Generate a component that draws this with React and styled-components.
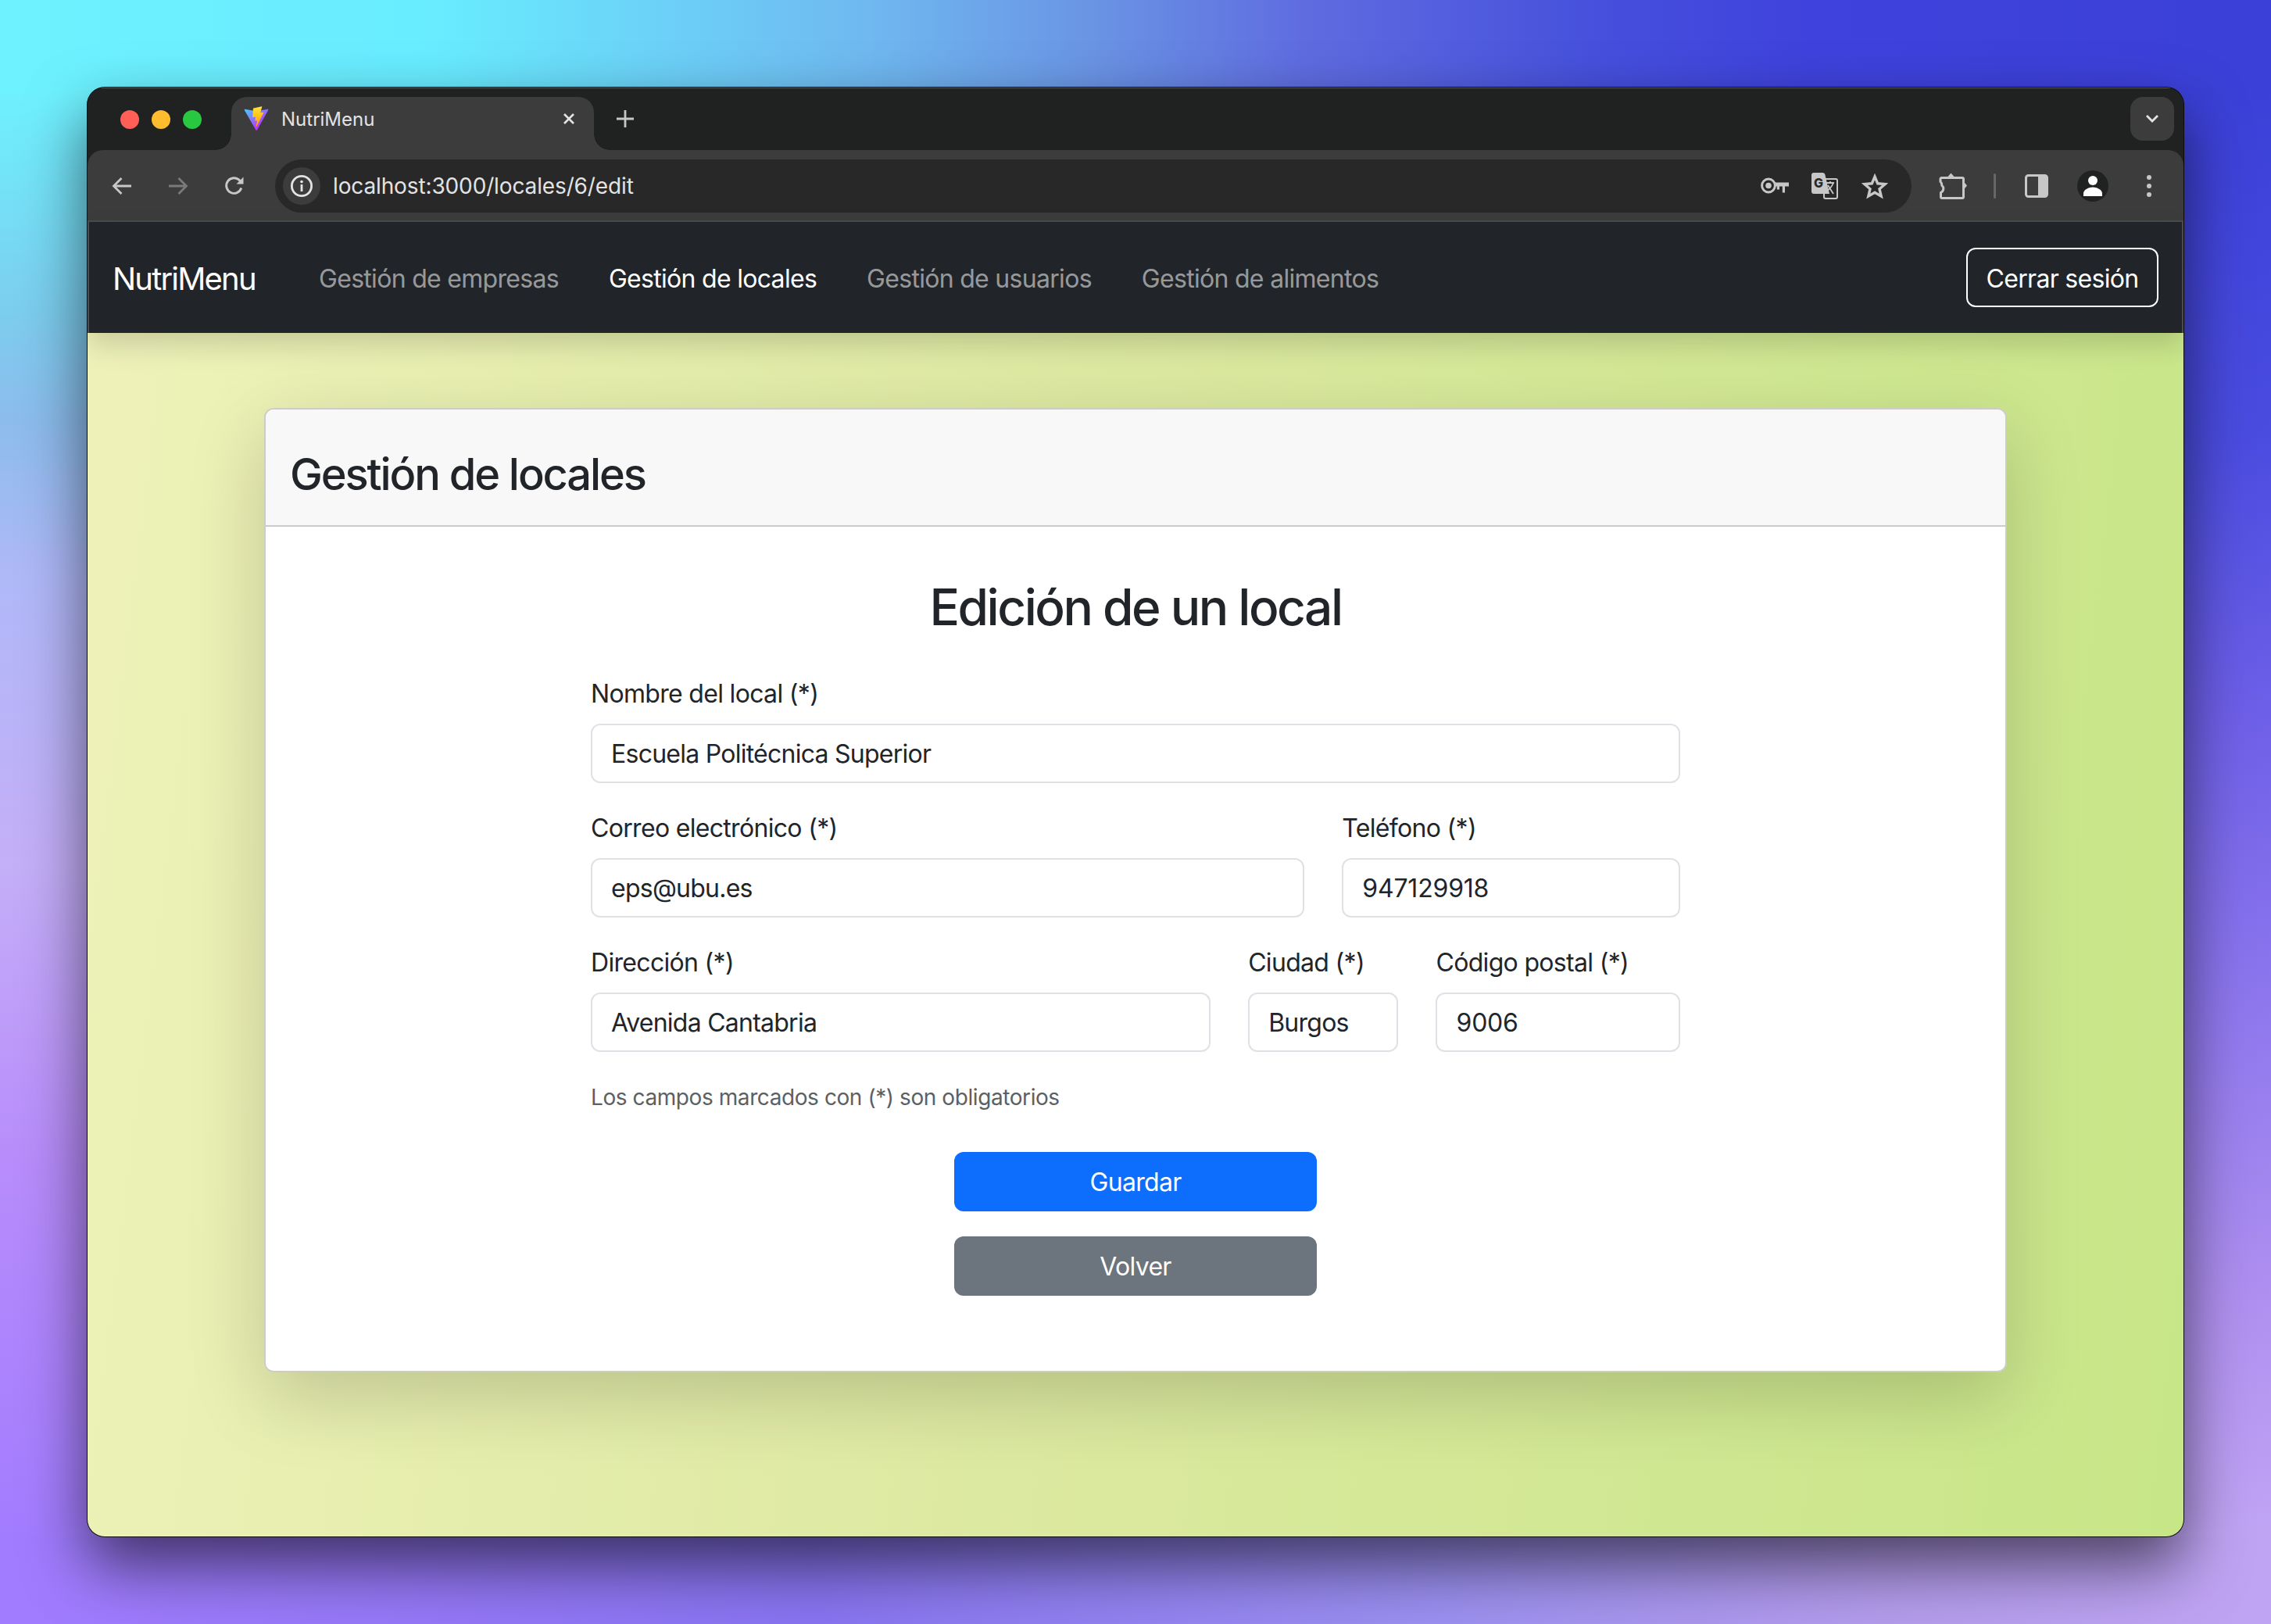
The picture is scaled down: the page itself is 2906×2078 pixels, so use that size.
import styled, { createGlobalStyle } from "styled-components";

const GlobalStyle = createGlobalStyle`
  html, body {
    margin: 0;
    padding: 0;
    width: 2906px;
    height: 2078px;
    overflow: hidden;
  }
  * {
    box-sizing: border-box;
  }
  body {
    font-family: Inter, "Liberation Sans", sans-serif;
    background:
      linear-gradient(90deg, #6ef2ff 0, #68ecff 556px, #6fb8f0 1112px, #6a95e4 1390px, #5f6ce0 1668px, #4650dc 2040px, #3f42dc 2316px, #3b40d8 2906px) top / 100% 112px no-repeat,
      linear-gradient(90deg, #a27cff 0, #8874f0 1038px, #9c90f0 1853px, #b49cec 2409px, #c0a4f4 2906px) bottom / 100% 112px no-repeat,
      linear-gradient(180deg, #6ef2ff 112px, #7ccdee 400px, #8cbcec 540px, #b0b8f8 741px, #c4aef8 1112px, #b88cfb 1482px, #a27cff 1966px) left / 50% 100% no-repeat,
      linear-gradient(180deg, #3b40d8 112px, #4a4ce0 556px, #6f60e8 926px, #8f78ee 1297px, #b090f0 1668px, #c0a4f4 1966px) right / 50% 100% no-repeat;
  }
`;

const Page = styled.div`
  padding: 112px 112px 0;
`;

const Window = styled.div`
  height: 1854px;
  display: flex;
  flex-direction: column;
  border-radius: 22px;
  overflow: hidden;
  background: #202221;
  box-shadow: 0 0 0 1px #0c0c0c, 0 36px 80px rgba(0, 0, 0, 0.6);
`;

const TabStrip = styled.div`
  height: 80px;
  flex: none;
  display: flex;
  align-items: flex-start;
  padding: 11px 12px 0 0;
  border-top: 1px solid #5a5c5b;
  background: #202221;
`;

const Lights = styled.div`
  display: flex;
  gap: 16px;
  width: 184px;
  flex: none;
  padding: 17px 0 0 42px;
`;

const Light = styled.span`
  width: 24px;
  height: 24px;
  border-radius: 50%;
  background: ${(p) => p.$color};
`;

const Tab = styled.div`
  position: relative;
  width: 464px;
  height: 68px;
  flex: none;
  display: flex;
  align-items: center;
  padding: 0 24px 12px 16px;
  border-radius: 20px 20px 0 0;
  background: #3c3c3c;
  color: #e3e3e3;
  font-size: 24px;

  &::before,
  &::after {
    content: "";
    position: absolute;
    bottom: 0;
    width: 20px;
    height: 20px;
  }
  &::before {
    left: -20px;
    background: radial-gradient(circle at 0 0, transparent 19.5px, #3c3c3c 20px);
  }
  &::after {
    right: -20px;
    background: radial-gradient(circle at 100% 0, transparent 19.5px, #3c3c3c 20px);
  }
`;

const TabTitle = styled.span`
  flex: 1;
  margin-left: 16px;
`;

const NewTab = styled.div`
  width: 40px;
  height: 56px;
  flex: none;
  display: flex;
  align-items: center;
  justify-content: center;
  margin-left: 20px;
`;

const TabMenu = styled.div`
  width: 56px;
  height: 56px;
  flex: none;
  display: flex;
  align-items: center;
  justify-content: center;
  margin-left: auto;
  border-radius: 16px;
  background: #3c3c3c;
`;

const Toolbar = styled.div`
  height: 92px;
  flex: none;
  display: flex;
  align-items: center;
  padding: 2px 8px 0;
  border-radius: 20px 20px 0 0;
  border-bottom: 2px solid #4a4c4b;
  background: #3c3c3c;
`;

const ToolButton = styled.div`
  width: ${(p) => p.$width || 72}px;
  height: 56px;
  flex: none;
  display: flex;
  align-items: center;
  justify-content: center;
`;

const Omnibox = styled.div`
  flex: 1;
  height: 68px;
  display: flex;
  align-items: center;
  margin: 0 17px 0 16px;
  padding: 0 15px 0 10px;
  border-radius: 34px;
  background: #282828;
`;

const InfoChip = styled.div`
  width: 48px;
  height: 48px;
  flex: none;
  display: flex;
  align-items: center;
  justify-content: center;
  border-radius: 50%;
  background: #3c3c3c;
`;

const Url = styled.span`
  flex: 1;
  margin-left: 16px;
  color: #e3e3e3;
  font-size: 28px;
  letter-spacing: -0.13px;
`;

const Separator = styled.span`
  width: 3px;
  height: 32px;
  flex: none;
  margin: 0 16px;
  border-radius: 2px;
  background: #666866;
`;

const Avatar = styled.div`
  width: 40px;
  height: 40px;
  display: flex;
  align-items: center;
  justify-content: center;
  border-radius: 50%;
  background: #202221;
`;

const NavBar = styled.nav`
  position: relative;
  z-index: 1;
  height: 142px;
  flex: none;
  display: flex;
  align-items: center;
  padding: 0 30px 0 30px;
  border-left: 2px solid #4a4c50;
  border-right: 2px solid #4a4c50;
  background: #212529;
  box-shadow: 0 16px 32px rgba(0, 0, 0, 0.15);
`;

const Brand = styled.span`
  width: 264px;
  flex: none;
  padding-top: 3px;
  color: #fff;
  font-size: 40px;
  letter-spacing: -1.8px;
`;

const NavLink = styled.span`
  margin-right: 64px;
  padding-top: 3px;
  color: ${(p) => (p.$active ? "#fff" : "rgba(255, 255, 255, 0.55)")};
  font-size: 32px;
  letter-spacing: -0.7px;
`;

const LogoutButton = styled.button`
  width: 246px;
  height: 76px;
  margin-left: auto;
  padding: 2px 0 0;
  border: 2px solid #fff;
  border-radius: 12px;
  background: transparent;
  color: #fff;
  font-family: inherit;
  font-size: 32px;
  letter-spacing: -0.7px;
`;

const Main = styled.main`
  flex: 1;
  padding: 96px 226px 0 226px;
  background: linear-gradient(97deg, #eef2b9 0%, #dde9a1 45%, #c7e687 100%);
`;

const CardShadow = styled.div`
  border-radius: 12px;
  box-shadow: 0 32px 96px rgba(0, 0, 0, 0.175);
`;

const Card = styled.section`
  height: 1234px;
  border: 2px solid #cdcdc6;
  border-radius: 12px;
  overflow: hidden;
  background: #fff;
`;

const CardHeader = styled.header`
  height: 150px;
  padding: 50px 31px 0;
  border-bottom: 2px solid #cccccc;
  background: #f8f8f8;
`;

const HeaderTitle = styled.h3`
  margin: 0;
  color: #212529;
  font-size: 56px;
  font-weight: 500;
  line-height: 67px;
  letter-spacing: -2.1px;
`;

const CardBody = styled.div`
  display: flex;
  flex-direction: column;
  align-items: center;
  padding-top: 64px;
`;

const FormTitle = styled.h2`
  margin: 0 0 47px;
  color: #212529;
  font-size: 64px;
  font-weight: 500;
  line-height: 77px;
  letter-spacing: -2.5px;
`;

const Form = styled.form`
  width: 1394px;
  display: grid;
  grid-template-columns: repeat(12, 1fr);
  column-gap: 48px;
  row-gap: 32px;
`;

const Field = styled.div`
  grid-column: span ${(p) => p.$span};
  min-width: 0;
`;

const Label = styled.label`
  display: block;
  margin-bottom: 14px;
  padding-top: 2px;
  color: #212529;
  font-size: 32px;
  line-height: 48px;
  letter-spacing: -0.68px;
`;

const Input = styled.input`
  display: block;
  width: 100%;
  height: 76px;
  padding: 0 24px;
  border: 2px solid #dee2e6;
  border-radius: 12px;
  background: #fff;
  color: #212529;
  font-family: inherit;
  font-size: 32px;
  letter-spacing: ${(p) => (p.$digits ? "-0.2px" : "-0.75px")};
  outline: none;
`;

const Hint = styled.small`
  grid-column: span 12;
  margin-top: 5px;
  color: #5c5f63;
  font-size: 28px;
  line-height: 42px;
  letter-spacing: -0.42px;
`;

const Actions = styled.div`
  display: flex;
  flex-direction: column;
  gap: 32px;
  margin-top: 49px;
`;

const ActionButton = styled.button`
  width: 464px;
  height: 76px;
  border: 0;
  border-radius: 12px;
  background: ${(p) => p.$color};
  color: #fff;
  font-family: inherit;
  font-size: 32px;
  letter-spacing: -0.7px;
`;

const ViteIcon = () => (
  <svg width="32" height="32" viewBox="0 0 410 404" fill="none">
    <defs>
      <linearGradient id="viteA" x1="6" y1="33" x2="235" y2="344" gradientUnits="userSpaceOnUse">
        <stop stopColor="#41D1FF" />
        <stop offset="1" stopColor="#BD34FE" />
      </linearGradient>
      <linearGradient id="viteB" x1="194.65" y1="8.8" x2="236" y2="292" gradientUnits="userSpaceOnUse">
        <stop stopColor="#FFEA83" />
        <stop offset="0.083" stopColor="#FFDD35" />
        <stop offset="1" stopColor="#FFA800" />
      </linearGradient>
    </defs>
    <path
      d="M399.641 59.5246L215.643 388.545C211.844 395.338 202.084 395.378 198.228 388.618L10.5817 59.5563C6.38087 52.1896 12.6802 43.2665 21.0281 44.7586L205.223 77.6824C206.398 77.8924 207.601 77.8904 208.776 77.6763L389.119 44.8058C397.439 43.2894 403.768 52.1434 399.641 59.5246Z"
      fill="url(#viteA)"
    />
    <path
      d="M292.965 1.5744L156.801 28.2552C154.563 28.6937 152.906 30.5903 152.771 32.8664L144.395 174.33C144.198 177.662 147.258 180.248 150.51 179.498L188.42 170.749C191.967 169.931 195.172 173.055 194.443 176.622L183.18 231.775C182.422 235.487 185.907 238.661 189.532 237.56L212.947 230.446C216.577 229.344 220.065 232.527 219.297 236.242L201.398 322.875C200.278 328.294 207.486 331.249 210.492 326.603L212.5 323.5L323.454 102.072C325.312 98.3645 322.108 94.137 318.036 94.9228L279.014 102.454C275.347 103.161 272.227 99.746 273.262 96.1583L298.731 7.86689C299.767 4.27314 296.636 0.855181 292.965 1.5744Z"
      fill="url(#viteB)"
    />
  </svg>
);

const CloseIcon = () => (
  <svg width="16" height="16" viewBox="0 0 16 16">
    <path d="M2 2l12 12M14 2L2 14" stroke="#e3e3e3" strokeWidth="2.6" />
  </svg>
);

const PlusIcon = () => (
  <svg width="22" height="22" viewBox="0 0 22 22">
    <path d="M11 0v22M0 11h22" stroke="#c7c7c7" strokeWidth="2.8" />
  </svg>
);

const ChevronIcon = () => (
  <svg width="18" height="12" viewBox="0 0 18 12" fill="none">
    <path d="M2 2l7 7 7-7" stroke="#e3e3e3" strokeWidth="2.8" />
  </svg>
);

const BackIcon = ({ color, flip }) => (
  <svg width="26" height="24" viewBox="0 0 26 24" fill="none" style={flip ? { transform: "scaleX(-1)" } : undefined}>
    <path d="M25 12H3M12.5 2L2.5 12l10 10" stroke={color} strokeWidth="2.8" />
  </svg>
);

const ReloadIcon = () => (
  <svg width="26" height="26" viewBox="0 0 26 26" fill="none">
    <path d="M21.8 15.5A9.8 9.8 0 1 1 19.6 5.8L23 9.2" stroke="#c7c7c7" strokeWidth="2.9" />
    <path d="M24.5 1.5v9h-9z" fill="#c7c7c7" />
  </svg>
);

const InfoIcon = () => (
  <svg width="30" height="30" viewBox="0 0 30 30" fill="none">
    <circle cx="15" cy="15" r="12.6" stroke="#e3e3e3" strokeWidth="2.8" />
    <circle cx="15" cy="9.6" r="1.8" fill="#e3e3e3" />
    <path d="M15 13v9" stroke="#e3e3e3" strokeWidth="2.8" />
  </svg>
);

const KeyIcon = () => (
  <svg width="36" height="22" viewBox="0 0 36 22" fill="none">
    <circle cx="10" cy="10.5" r="8.4" stroke="#c7c7c7" strokeWidth="3" />
    <circle cx="10" cy="10.5" r="3.8" fill="#c7c7c7" />
    <path d="M18 6.5h18v5h-5v8h-3.2v-8H24v4h-3.2v-4H18z" fill="#c7c7c7" />
  </svg>
);

const TranslateIcon = () => (
  <svg width="34" height="34" viewBox="0 0 34 34" fill="none">
    <rect x="16" y="8" width="17" height="25" rx="2" stroke="#c7c7c7" strokeWidth="2" fill="#282828" />
    <path d="M3 0h11c2 0 3 1 3.4 2.6L23 27H3a3 3 0 0 1-3-3V3a3 3 0 0 1 3-3z" fill="#c7c7c7" />
    <text x="3" y="19" fill="#282828" fontFamily="Inter, sans-serif" fontSize="16" fontWeight="800">G</text>
    <path d="M19 13h10M24 11v2M28 13c-2 5-5 8-8 10M21 16l7 11" stroke="#c7c7c7" strokeWidth="1.8" />
  </svg>
);

const StarIcon = () => (
  <svg width="34" height="33" viewBox="0 0 34 33" fill="none">
    <path d="M17 4l3.7 8.8 9.5.8-7.2 6.2 2.2 9.3L17 24.2l-8.2 4.9L11 19.8 3.8 13.6l9.5-.8z" stroke="#c7c7c7" strokeWidth="3.4" />
  </svg>
);

const PuzzleIcon = () => (
  <svg width="36" height="34" viewBox="0 0 36 34" fill="none">
    <path d="M15.5 0.5l4 4.5h-8zM32 11.5l4 5-4 5z" fill="#c7c7c7" />
    <path
      d="M4 6.5h26a1.5 1.5 0 0 1 1.5 1.5v23a1.5 1.5 0 0 1-1.5 1.5H4A1.5 1.5 0 0 1 2.5 31v-5.5c3.6-1.6 4.4-6.6 1.8-8.7C3 15.7 4.6 13.8 2 11.5V8A1.5 1.5 0 0 1 4 6.5z"
      stroke="#c7c7c7"
      strokeWidth="3"
    />
  </svg>
);

const SidePanelIcon = () => (
  <svg width="30" height="30" viewBox="0 0 30 30" fill="none">
    <rect x="1.5" y="1.5" width="27" height="27" rx="3" stroke="#c7c7c7" strokeWidth="3" />
    <rect x="17" y="1.5" width="11.5" height="27" fill="#c7c7c7" />
  </svg>
);

const PersonIcon = () => (
  <svg width="26" height="28" viewBox="0 0 26 28">
    <circle cx="13" cy="7" r="6" fill="#fff" />
    <path d="M1 27v-3.5C1 18.5 8 15.5 13 15.5s12 3 12 8V27z" fill="#fff" />
  </svg>
);

const DotsIcon = () => (
  <svg width="6" height="28" viewBox="0 0 6 28">
    <circle cx="3" cy="3" r="3" fill="#c7c7c7" />
    <circle cx="3" cy="14" r="3" fill="#c7c7c7" />
    <circle cx="3" cy="25" r="3" fill="#c7c7c7" />
  </svg>
);

const App = () => {
  return (
    <Page>
      <GlobalStyle />
      <Window>
        <TabStrip>
          <Lights>
            <Light $color="#ff5f57" />
            <Light $color="#febc2e" />
            <Light $color="#28c840" />
          </Lights>
          <Tab>
            <ViteIcon />
            <TabTitle>NutriMenu</TabTitle>
            <CloseIcon />
          </Tab>
          <NewTab>
            <PlusIcon />
          </NewTab>
          <TabMenu>
            <ChevronIcon />
          </TabMenu>
        </TabStrip>
        <Toolbar>
          <ToolButton>
            <BackIcon color="#c7c7c7" />
          </ToolButton>
          <ToolButton>
            <BackIcon color="#7a7a7a" flip />
          </ToolButton>
          <ToolButton>
            <ReloadIcon />
          </ToolButton>
          <Omnibox>
            <InfoChip>
              <InfoIcon />
            </InfoChip>
            <Url>localhost:3000/locales/6/edit</Url>
            <ToolButton $width={64}>
              <KeyIcon />
            </ToolButton>
            <ToolButton $width={64}>
              <TranslateIcon />
            </ToolButton>
            <ToolButton $width={64}>
              <StarIcon />
            </ToolButton>
          </Omnibox>
          <ToolButton>
            <PuzzleIcon />
          </ToolButton>
          <Separator />
          <ToolButton>
            <SidePanelIcon />
          </ToolButton>
          <ToolButton>
            <Avatar>
              <PersonIcon />
            </Avatar>
          </ToolButton>
          <ToolButton>
            <DotsIcon />
          </ToolButton>
        </Toolbar>
        <NavBar>
          <Brand>NutriMenu</Brand>
          <NavLink>Gestión de empresas</NavLink>
          <NavLink $active>Gestión de locales</NavLink>
          <NavLink>Gestión de usuarios</NavLink>
          <NavLink>Gestión de alimentos</NavLink>
          <LogoutButton>Cerrar sesión</LogoutButton>
        </NavBar>
        <Main>
          <CardShadow>
            <Card>
              <CardHeader>
                <HeaderTitle>Gestión de locales</HeaderTitle>
              </CardHeader>
              <CardBody>
                <FormTitle>Edición de un local</FormTitle>
                <Form>
                  <Field $span={12}>
                    <Label>Nombre del local (*)</Label>
                    <Input readOnly value="Escuela Politécnica Superior" />
                  </Field>
                  <Field $span={8}>
                    <Label>Correo electrónico (*)</Label>
                    <Input readOnly value="eps@ubu.es" />
                  </Field>
                  <Field $span={4}>
                    <Label>Teléfono (*)</Label>
                    <Input readOnly $digits value="947129918" />
                  </Field>
                  <Field $span={7}>
                    <Label>Dirección (*)</Label>
                    <Input readOnly value="Avenida Cantabria" />
                  </Field>
                  <Field $span={2}>
                    <Label>Ciudad (*)</Label>
                    <Input readOnly value="Burgos" />
                  </Field>
                  <Field $span={3}>
                    <Label>Código postal (*)</Label>
                    <Input readOnly $digits value="9006" />
                  </Field>
                  <Hint>Los campos marcados con (*) son obligatorios</Hint>
                </Form>
                <Actions>
                  <ActionButton $color="#0d6efd">Guardar</ActionButton>
                  <ActionButton $color="#6c757d">Volver</ActionButton>
                </Actions>
              </CardBody>
            </Card>
          </CardShadow>
        </Main>
      </Window>
    </Page>
  );
};

export default App;
